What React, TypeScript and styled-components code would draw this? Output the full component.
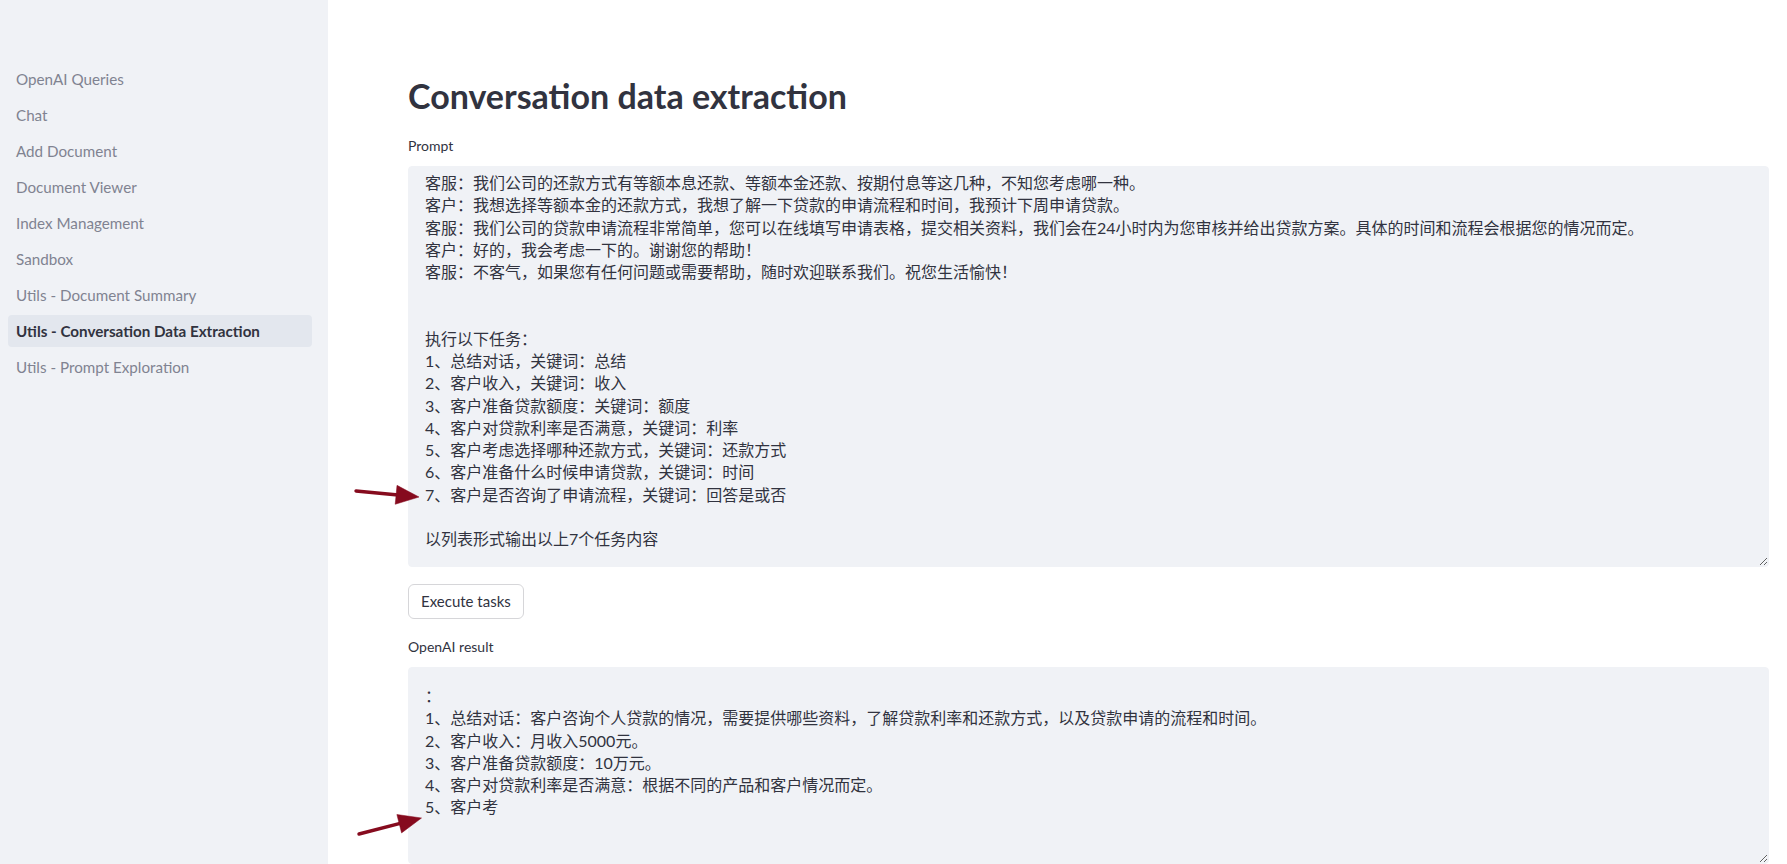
import React from "react";
import styled, { createGlobalStyle } from "styled-components";

const GlobalStyle = createGlobalStyle`
  html, body {
    margin: 0;
    padding: 0;
    height: 100%;
    overflow: hidden;
    background: #ffffff;
  }
  body {
    font-family: Lato, "Noto Sans CJK SC", sans-serif;
    color: #31333f;
  }
  * { box-sizing: border-box; }
`;

const Page = styled.div`
  position: relative;
  display: flex;
  width: 100%;
  height: 100vh;
  overflow: hidden;
`;

const Sidebar = styled.nav`
  flex: 0 0 328px;
  background: #f0f2f6;
  padding: 63px 16px 0 8px;
  display: flex;
  flex-direction: column;
  gap: 4px;
`;

const NavItem = styled.div<{ $active?: boolean }>`
  height: 32px;
  display: flex;
  align-items: center;
  padding: 0 8px;
  border-radius: 4px;
  font-size: 15.2px;
  font-weight: ${(p) => (p.$active ? 700 : 400)};
  color: ${(p) => (p.$active ? "#31333f" : "#808391")};
  background: ${(p) => (p.$active ? "#e3e7ee" : "transparent")};
  white-space: nowrap;
`;

const Main = styled.main`
  flex: 1;
  min-width: 0;
  padding: 75px 18px 0 80px;
  display: flex;
  flex-direction: column;
`;

const Title = styled.h1`
  margin: 0 0 19px;
  font-size: 34px;
  line-height: 41px;
  font-weight: 700;
  color: #31333f;
`;

const Label = styled.div<{ $top?: number }>`
  margin-top: ${(p) => p.$top ?? 0}px;
  margin-bottom: 10px;
  font-size: 14px;
  line-height: 21px;
  color: #31333f;
`;

const Area = styled.textarea<{ $h: number; $pt: number }>`
  display: block;
  width: 100%;
  height: ${(p) => p.$h}px;
  flex: 0 0 auto;
  margin: 0;
  padding: ${(p) => p.$pt}px 16px 0 16px;
  border: 1px solid #f0f2f6;
  border-radius: 4px;
  background: #f0f2f6;
  color: #31333f;
  font-family: Lato, "Noto Sans CJK SC", sans-serif;
  font-size: 16px;
  line-height: 22.25px;
  resize: vertical;
  outline: none;
  overflow: hidden;
`;

const Button = styled.button`
  align-self: flex-start;
  margin-top: 16.5px;
  height: 36px;
  padding: 0 12px;
  border: 1px solid #d6d6d9;
  border-radius: 6px;
  background: #ffffff;
  color: #31333f;
  font-family: Lato, "Noto Sans CJK SC", sans-serif;
  font-size: 15px;
  cursor: pointer;
`;

const Overlay = styled.svg`
  position: absolute;
  left: 0;
  top: 0;
  width: 100%;
  height: 100%;
  pointer-events: none;
`;

const navItems = [
  "OpenAI Queries",
  "Chat",
  "Add Document",
  "Document Viewer",
  "Index Management",
  "Sandbox",
  "Utils - Document Summary",
  "Utils - Conversation Data Extraction",
  "Utils - Prompt Exploration",
];

const promptText = [
  "客服：我们公司的还款方式有等额本息还款、等额本金还款、按期付息等这几种，不知您考虑哪一种。",
  "客户：我想选择等额本金的还款方式，我想了解一下贷款的申请流程和时间，我预计下周申请贷款。",
  "客服：我们公司的贷款申请流程非常简单，您可以在线填写申请表格，提交相关资料，我们会在24小时内为您审核并给出贷款方案。具体的时间和流程会根据您的情况而定。",
  "客户：好的，我会考虑一下的。谢谢您的帮助！",
  "客服：不客气，如果您有任何问题或需要帮助，随时欢迎联系我们。祝您生活愉快！",
  "",
  "",
  "执行以下任务：",
  "1、总结对话，关键词：总结",
  "2、客户收入，关键词：收入",
  "3、客户准备贷款额度：关键词：额度",
  "4、客户对贷款利率是否满意，关键词：利率",
  "5、客户考虑选择哪种还款方式，关键词：还款方式",
  "6、客户准备什么时候申请贷款，关键词：时间",
  "7、客户是否咨询了申请流程，关键词：回答是或否",
  "",
  "以列表形式输出以上7个任务内容",
].join("\n");

const resultText = [
  "：",
  "1、总结对话：客户咨询个人贷款的情况，需要提供哪些资料，了解贷款利率和还款方式，以及贷款申请的流程和时间。",
  "2、客户收入：月收入5000元。",
  "3、客户准备贷款额度：10万元。",
  "4、客户对贷款利率是否满意：根据不同的产品和客户情况而定。",
  "5、客户考",
].join("\n");

function Arrow({ x1, y1, x2, y2 }: { x1: number; y1: number; x2: number; y2: number }) {
  const dx = x2 - x1;
  const dy = y2 - y1;
  const len = Math.hypot(dx, dy);
  const ux = dx / len;
  const uy = dy / len;
  const hl = 23;
  const hw = 9.5;
  const bx = x2 - ux * hl;
  const by = y2 - uy * hl;
  const px = -uy;
  const py = ux;
  const pts = `${x2},${y2} ${bx + px * hw},${by + py * hw} ${bx - px * hw},${by - py * hw}`;
  return (
    <g fill="#860b1e" stroke="#860b1e">
      <line x1={x1} y1={y1} x2={bx + ux * 2} y2={by + uy * 2} strokeWidth={3.4} strokeLinecap="round" />
      <polygon points={pts} strokeWidth={0.5} strokeLinejoin="round" />
    </g>
  );
}

export default function App() {
  return (
    <>
      <GlobalStyle />
      <Page>
        <Sidebar>
          {navItems.map((t) => (
            <NavItem key={t} $active={t === "Utils - Conversation Data Extraction"}>
              {t}
            </NavItem>
          ))}
        </Sidebar>
        <Main>
          <Title>Conversation data extraction</Title>
          <Label>Prompt</Label>
          <Area $h={401} $pt={5} readOnly value={promptText} />
          <Button>Execute tasks</Button>
          <Label $top={17.5}>OpenAI result</Label>
          <Area $h={197} $pt={17} readOnly value={resultText} />
        </Main>
        <Overlay>
          <Arrow x1={356} y1={491} x2={419} y2={497} />
          <Arrow x1={359} y1={834} x2={421.5} y2={818} />
        </Overlay>
      </Page>
    </>
  );
}
